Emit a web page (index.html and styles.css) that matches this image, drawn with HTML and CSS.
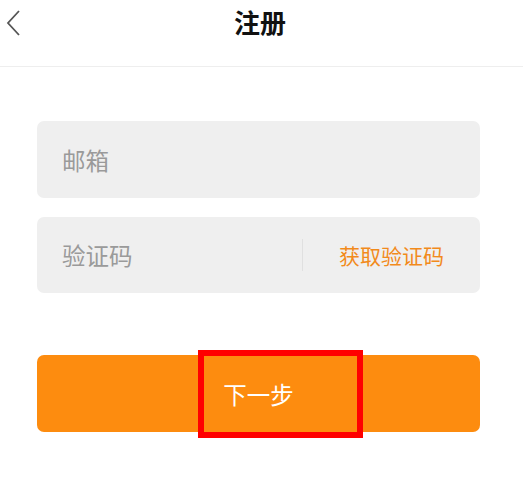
FILE: index.html
```html
<!DOCTYPE html>
<html lang="zh">
<head>
<meta charset="utf-8">
<link rel="stylesheet" href="styles.css">
</head>
<body>
<header class="nav">
  <svg class="back" width="16" height="28" viewBox="0 0 16 28"><path d="M14 2 L3 14 L14 26" fill="none" stroke="#555" stroke-width="1.8"/></svg>
  <h1 class="title">注册</h1>
</header>
<main class="form">
  <div class="field"><span class="ph">邮箱</span></div>
  <div class="field code">
    <span class="ph grow">验证码</span>
    <span class="sep"></span>
    <span class="get">获取验证码</span>
  </div>
  <div class="btn-wrap">
    <button class="next">下一步</button>
    <span class="mark"></span>
  </div>
</main>
</body>
</html>
```
FILE: styles.css
```css
* { box-sizing: border-box; }
body {
  margin: 0;
  width: 523px;
  height: 486px;
  background: #fff;
  font-family: "Noto Sans CJK SC", "Noto Sans", sans-serif;
  overflow: hidden;
}
.nav {
  height: 67px;
  border-bottom: 1px solid #eeeeee;
  position: relative;
  display: flex;
  justify-content: center;
}
.back {
  position: absolute;
  left: 5px;
  top: 9px;
}
.title {
  margin: 0;
  margin-top: 4px;
  font-size: 26px;
  line-height: 36px;
  font-weight: 700;
  color: #111;
  padding-right: 3px;
}
.form {
  margin-left: 37px;
  width: 443px;
  padding-top: 54px;
  display: flex;
  flex-direction: column;
}
.field {
  height: 77px;
  background: #efefef;
  border-radius: 7px;
  display: flex;
  align-items: center;
  padding: 0 25px;
}
.field + .field { margin-top: 19px; height: 76px; }
.ph {
  font-size: 23.5px;
  color: #9a9a9a;
  line-height: 30px;
}
.grow { flex: 1; }
.sep {
  width: 1px;
  height: 32px;
  background: #e0e0e0;
  margin-right: 36px;
}
.get {
  font-size: 21px;
  color: #f28a1b;
  margin-right: 11px;
}
.btn-wrap {
  position: relative;
  margin-top: 62px;
}
.next {
  width: 100%;
  height: 77px;
  border: none;
  border-radius: 7px;
  background: #fd8c0f;
  color: #fff;
  font-family: inherit;
  font-size: 23.5px;
  padding: 0 0 0 0;
  display: block;
}
.mark {
  position: absolute;
  left: 161px;
  top: -5px;
  width: 165px;
  height: 88px;
  border: 6px solid #ff0000;
  pointer-events: none;
}
```
